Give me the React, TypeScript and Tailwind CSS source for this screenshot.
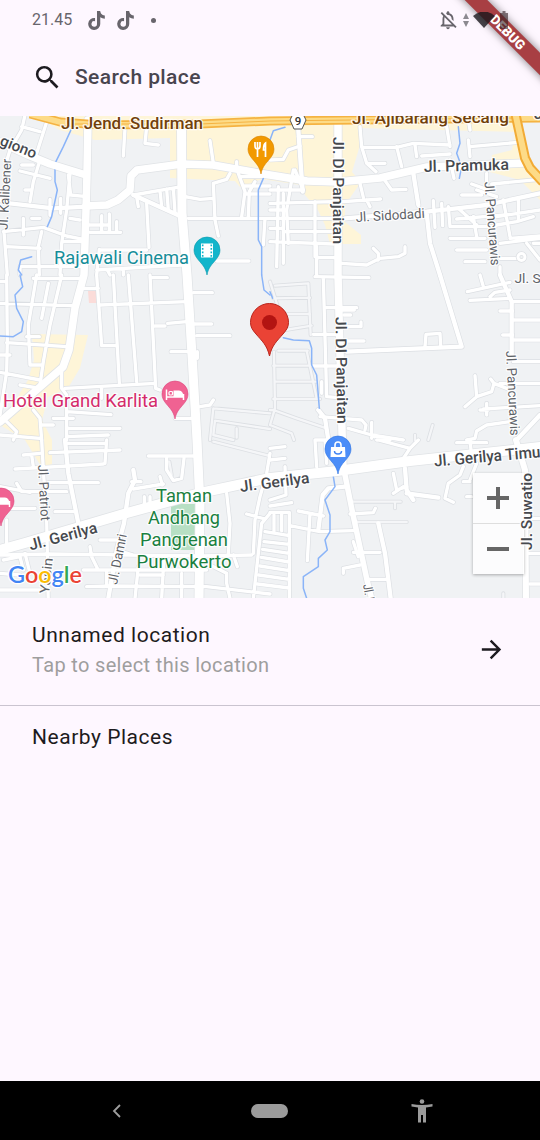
import React from "react";
import { MdSearch, MdArrowForward, MdOutlineNotificationsOff } from "react-icons/md";
import { FaTiktok } from "react-icons/fa";

type Tile = { x: number; y: number; minor: string; mid?: string; lane?: string; river?: string };

// Road geometry, stored in sections drawn at three times map scale.
const tiles: Tile[] = [
  {
    x: 0, y: 110,
    minor:
      "M75 15L65 60L30 120L18 160 M65 50L120 65 M145 20L110 130 M120 150L100 215L90 275 M65 165h35 M60 183L150 205 M75 240h20 M205 195L212 255L260 260 M210 190L200 300L185 400L180 495 M150 268v48 M182 265v45 M95 325h25 M10 365L130 352L200 378L250 388 M12 365L22 495 M20 410L120 415 M125 365L115 410L118 495 M210 325L240 330 M190 395h60 M70 325L70 375 M265 345h60 M270 367h92 M305 317v48 M328 312v50 M350 335v30 M375 55L370 138 M440 50L435 100L475 105 M630 92L640 160 M710 155v20 M400 255L545 230 M480 242L485 290 M500 237L505 300 M520 235L525 308 M410 260L415 290 M440 280L447 412 M545 258L600 268L640 265 M690 190L680 208L640 220L645 330L655 378 M565 325H810 M715 190L735 245L725 320 M765 215L748 245L745 320 M720 200h90 M730 228h80 M740 252h70 M795 325L790 405 M300 420H440 M322 480L330 495 M298 418L290 495 M290 480L545 465 M370 475v20 M650 453h97 M60 470h180 M60 470v25",
    mid: "M0 270L30 280L160 295L260 290 M400 255L545 320",
    river: "M215 55L190 110L165 160L165 215L172 240L155 320L142 350 M790 205L775 240L775 390L785 410V495 M95 440L62 450L55 480L65 495",
  },
  {
    x: 270, y: 110,
    minor:
      "M85 80h42 M0 150L40 148L55 120L90 108 M270 50L275 110L290 160L345 160 M290 160L318 185 M275 112L380 112L430 100L540 105 M600 110L745 97 M380 110L395 170 M435 105L440 140 M530 50L540 110 M540 150L552 205 M595 30L600 60 M595 90L600 140 M455 138L540 132 M340 205L365 240L408 238 M270 220L280 262 M190 277L332 267 M0 240h100 M0 280L190 275 M70 180L50 300L55 400 M0 325H190 M45 365H190 M0 395L190 402 M40 250L40 460 M25 230L20 470 M135 275V440 M140 410V495 M140 443h60 M0 355h40 M0 300h50 M75 180L100 240 M490 272L495 352 M515 280L518 347 M535 290L540 350 M545 350h130 M560 327L720 313 M568 298L620 345 M540 385h105 M560 420h90 M585 455h60 M665 222L810 208 M575 255h60 M605 222L650 238 M650 190V240 M700 270L720 380 M720 385L810 378 M680 345L740 335L790 320 M745 270V330 M690 400L810 385 M690 445H740 M690 470V495 M290 270L300 290 M215 460L290 465L330 445L385 440L405 430L405 410 M325 450L325 430L310 415 M770 400L810 450 M790 400h20 M610 320L620 380 M680 320L810 300 M620 240L680 260",
    mid: "M85 60L98 245 M225 325L470 305L560 295L650 285L810 250 M470 310L480 400L510 495 M430 190L445 285",
    river: "M0 90L10 62L45 52 M565 50L570 100L560 130L575 170L568 205",
  },
  {
    x: 0, y: 275,
    minor:
      "M20 0L22 200L20 290L0 420 M0 85L215 92 M110 0L85 150L90 270L125 270 M145 25L125 130 M185 0L150 150L130 260L120 330 M80 185h38 M20 203L200 215 M0 240h30 M0 292L120 315 M100 10H240 M240 40H295 M290 0L305 212L350 212 M340 0L358 325 M385 0L410 320 M450 0L467 340L480 345 M300 90L560 80 M450 8H502 M465 153h30 M503 145L560 140 M580 53h57 M580 147h55 M590 182h100 M513 230h50 M592 230v20 M195 340L465 325 M185 290L185 340L200 360L200 495 M305 340v30 M200 410L333 419 M200 460H360 M200 485L325 480 M100 405L120 430L125 495 M0 480L120 490 M125 450h35 M600 395L630 390L640 375 M525 430h60 M60 330L120 340 M0 20h20 M20 440L50 470L40 495 M160 430h60",
    lane: "M640 400L810 415 M640 400L630 495 M645 437L810 462 M645 437L640 480L700 495 M710 460v28",
    river: "M60 0L68 35L45 60L50 100L70 140L65 170L40 185L0 183 M785 0L792 45L810 60",
  },
  {
    x: 270, y: 275,
    minor:
      "M135 5L297 8 M160 10L170 365L205 368 M155 320V355 M165 98h95 M215 105h38 M130 178h80 M225 155h48v-14 M225 198h57 M130 273h80 M465 215L468 178L510 175L512 213 M592 50L720 22 M600 76L720 70 M630 0L640 35 M660 65L675 52L720 45 M690 108h38 M698 180h30 M730 80h80 M730 135h80 M730 195h80 M730 260h80 M690 325h120 M640 402L810 392 M615 302L620 365L585 395 M620 365L665 350L672 325L662 312 M672 325L710 340 M650 385v35 M630 405h25 M590 495L615 490L620 468L650 450L720 440 M150 425L275 435L288 450L285 465 M235 460L305 480L400 495 M305 442V490 M222 120h20",
    mid: "M230 230L575 215L510 0 M690 0L725 80L725 240 M145 405L165 430L175 495 M740 495L810 420",
    lane: "M15 32L115 25L122 180 M10 70L120 68 M20 117h100 M45 165L125 152 M25 227h88 M10 272h120 M15 320H138 M10 372H150 M12 230L15 400L0 450 M110 227L125 300L140 370 M10 405L80 430L170 460 M0 20L25 100 M475 495L488 450 M435 480V495 M0 450L65 475L72 495 M0 405L10 405",
    river: "M0 50L8 70 M40 188L70 195L118 197L125 220L125 270L140 300L148 400",
  },
  {
    x: 0, y: 440,
    minor:
      "M125 0L130 90L140 240L145 495 M45 87L310 72 M70 45L120 40 M95 45L100 80 M150 38L360 30 M320 0L315 70 M200 10h115 M50 130L65 155L200 155 M0 140L90 157 M145 128h150 M165 215h55 M30 205h75 M20 240V320 M395 125h28 M400 147L490 132 M480 110L487 135 M445 48H585 M500 55L500 90L520 122L545 115L552 55 M433 170v40 M450 170v40 M0 345L150 342L600 348L755 345 M270 320L275 350L292 385 M10 360L60 350L70 390 M75 340L90 400 M300 300h60 M250 390H620 M260 440L330 438L620 440L810 462 M415 380L405 475 M420 405h70 M492 350L485 475 M545 400V475 M680 160L690 250L685 340 M810 40L800 100L780 170L765 240L760 340 M740 222L795 237 M810 220L785 250L760 475 M700 345L712 380 M680 430L690 475 M0 400L60 405 M0 450h120 M630 375L680 400L680 430 M320 390V440 M350 330L400 345",
    mid: "M195 0L205 100L235 250 M400 90L405 120L385 160L372 250L350 330L325 475",
    lane: "M640 5L810 48 M508 65L515 105",
  },
  {
    x: 270, y: 440,
    minor:
      "M45 80L48 165L0 180 M85 213L160 228 M120 220L112 362 M60 257L150 275L250 272 M240 222L310 218L316 205 M250 337h80 M295 418h55 M270 375L220 385L220 400 M135 0L140 80 M165 0L170 70 M135 0h45 M325 0L420 25L445 0 M420 25L400 55 M370 100L380 150L410 140 M370 160L400 140 M580 80L570 105L535 130L525 175L550 187 M0 60L45 55 M0 25L45 20 M600 0L605 50 M560 8h90 M770 235h40 M770 340h40 M780 432h30 M590 170h15 M620 70L600 120 M250 305L265 350 M580 125h20 M0 198L65 188 M320 0H360 M0 217H58V475 M12 225v48 M35 222v50 M-15 275L58 287 M-18 305L58 313 M-22 328L58 340 M-26 352L58 366 M-30 378L58 392 M-34 405L58 418 M-38 432L58 444",
    mid: "M225 140L175 145L158 165L145 270 M405 85L410 150L430 180 M410 160L505 173 M325 250L345 340L362 475",
    lane: "M240 185H392 M375 185v20 M250 246H410 M700 460v15",
    river: "M190 110L195 140L165 180L180 225L180 275L165 300L172 330L145 355L145 380L100 410L100 445L110 475",
  },
];

const majors = [
  { d: "M88 120L87 173L86 210L84 275L75 308L69 350L63 367L40 387L0 422", w: 7.5 },
  { d: "M181.500 128L182 213L187 275L192 355L197 440L200 505L199 600", w: 9 },
  { d: "M86 206L107 205L118 200L130 190L131 176L137 170L182 164L213 165L270 175L307 181L337 182L380 178L427 167L525 163", w: 7.5 },
  { d: "M0 142L28 155L50 164L86 175", w: 7.5 },
  { d: "M338 124L338 275L343 470", w: 7.5 },
  { d: "M344 470L352 510L367 580L372 600", w: 5.5 },
  { d: "M516 440L525 470L526 600", w: 6 },
  { d: "M0 550L25 543L127 513L200 493L270 478L337 471L410 461L540 447", w: 10 },
];

function Roads() {
  const at = (t: Tile) => `translate(${t.x} ${t.y}) scale(.33333)`;
  return (
    <g fill="none" strokeLinecap="round" strokeLinejoin="round">
      {tiles.map((t, i) => (
        <g key={i} transform={at(t)} stroke="#dcdfe3">
          <path d={t.lane} strokeWidth="12" />
          <path d={t.minor} strokeWidth="14" />
          <path d={t.mid} strokeWidth="17" />
        </g>
      ))}
      {majors.map((m, i) => (
        <path key={i} d={m.d} stroke="#e0e3e6" strokeWidth={m.w + 1.5} />
      ))}
      {tiles.map((t, i) => (
        <g key={i} transform={at(t)} stroke="#fff">
          <path d={t.lane} strokeWidth="7" stroke="#f5f6f8" />
          <path d={t.minor} strokeWidth="10" />
          <path d={t.mid} strokeWidth="13" />
        </g>
      ))}
      {tiles.map((t, i) => (
        <path key={i} d={t.river} transform={at(t)} stroke="#8ab4f8" strokeWidth="4.500" />
      ))}
      {majors.map((m, i) => (
        <path key={i} d={m.d} stroke="#fff" strokeWidth={m.w} />
      ))}
      <circle cx="521.500" cy="257" r="3.500" fill="#f1f3f4" stroke="#dcdfe3" strokeWidth="4.500" />
      <circle cx="521.500" cy="257" r="3.500" stroke="#fff" strokeWidth="3" />
    </g>
  );
}

function Label({ x, y, w, size, color = "#46494e", weight = 500, rotate = 0, children }: {
  x: number; y: number; w: number; size: number; color?: string; weight?: number; rotate?: number; children: string;
}) {
  return (
    <text transform={`translate(${x} ${y}) rotate(${rotate})`} fontSize={size} fontWeight={weight} fill={color}
      textLength={w} lengthAdjust="spacingAndGlyphs" stroke="#fff" strokeOpacity=".85" strokeWidth="2.500" strokeLinejoin="round" paintOrder="stroke">
      {children}
    </text>
  );
}

function Pin({ x, y, color, edge, children }: { x: number; y: number; color: string; edge: string; children: React.ReactNode }) {
  return (
    <g transform={`translate(${x} ${y})`}>
      <path d="M0 25C-1.500 17-5 14.500-9 9.500C-11.500 6.500-13 3.500-13 0A13 13 0 0 1 13 0C13 3.500 11.500 6.500 9 9.500C5 14.500 1.500 17 0 25Z" fill={color} stroke={edge} strokeWidth=".6" />
      {children}
    </g>
  );
}

function Hotel() {
  return (
    <g>
      <path d="M-8.500-4.500V6M-8.500 3H8.500M8.500 6V0" stroke="#fff" strokeWidth="1.500" fill="none" />
      <path d="M-1.500-3.500H4Q8.500-3 8.500 3H-1.500Z" fill="#fff" />
      <rect x="-6" y="-2.500" width="3.500" height="3.500" rx="1" fill="none" stroke="#fff" strokeWidth="1.200" />
    </g>
  );
}

function MapView() {
  return (
    <svg viewBox="0 116 540 482" className="block h-full w-full" fontFamily="Roboto, sans-serif">
      <rect y="116" width="540" height="482" fill="#f0f2f4" />
      <g fill="#fef5d8">
        <path d="M35 116H515L525 165L540 182V200L520 180L490 172L492 155L512 150L515 132L360 128V145L352 172L361 182L345 205V222L361 235V244H330L325 225L318 210L305 195L300 185L262 179L240 187L235 181L170 178V138L95 140L60 130Z" />
        <path d="M32 334L88 335L80 368L68 388L48 397L42 420L52 440V464L42 468L25 440L0 425L28 380L34 360Z" />
      </g>
      <path d="M88 291h10v12h-9Z" fill="#fbdcd9" />
      <path d="M171 504H200V550H171Z" fill="#b7dfc4" />
      <Roads />
      <g fill="none" strokeLinejoin="round">
        <path d="M30 114L60 122L100 125L200 124L270 121L540 118" stroke="#f5b342" strokeWidth="9" />
        <path d="M30 114L60 122L100 125L200 124L270 121L540 118" stroke="#fddb87" strokeWidth="5.500" />
        <path d="M68 124L200 124L270 121L515 118" stroke="#f5b342" strokeWidth="1" />
        <path d="M515 112L525 158L530 168L543 182" stroke="#f2ab35" strokeWidth="10" />
        <path d="M515 112L525 158L530 168L543 182" stroke="#fddb87" strokeWidth="6" />
      </g>
      <path d="M294 112h8l4 8-4 9h-8l-4-9Z" fill="#fff" stroke="#555" strokeWidth="1" />
      <text x="298" y="125" fontSize="11.500" fontWeight="500" textAnchor="middle" fill="#333">9</text>

      <Label x={61} y={128.500} w={142} size={16} color="#713f0c">Jl. Jend. Sudirman</Label>
      <Label x={352} y={124} w={157} size={16} color="#713f0c" rotate={-0.5}>Jl. Ajibarang Secang</Label>
      <Label x={534} y={119} w={30} size={15}>Jl. S</Label>
      <Label x={-1} y={144.500} w={38} size={15} rotate={22}>giono</Label>
      <Label x={7.500} y={230} w={71} size={13} weight={400} rotate={-87} color="#5f6368">Jl. Kalibener</Label>
      <Label x={424} y={172} w={85} size={16} rotate={-1.5}>Jl. Pramuka</Label>
      <Label x={356} y={222} w={69} size={13.500} weight={400} rotate={-3.5} color="#5f6368">Jl. Sidodadi</Label>
      <Label x={333} y={137} w={107} size={15} rotate={90}>Jl. DI Panjaitan</Label>
      <Label x={335.500} y={317} w={107} size={15} rotate={89}>Jl. DI Panjaitan</Label>
      <Label x={484.500} y={182} w={84} size={13.500} weight={400} rotate={85.5} color="#5f6368">Jl. Pancurawis</Label>
      <Label x={506} y={351} w={85} size={13.500} weight={400} rotate={87} color="#5f6368">Jl. Pancurawis</Label>
      <Label x={514.500} y={283} w={66} size={13.500} weight={400} color="#5f6368">Jl. Sutomo</Label>
      <Label x={434.500} y={466.500} w={112} size={16} rotate={-5}>Jl. Gerilya Timur</Label>
      <Label x={240.500} y={492} w={70} size={15.500} rotate={-7.5}>Jl. Gerilya</Label>
      <Label x={30.500} y={550.500} w={70} size={15.500} rotate={-15}>Jl. Gerilya</Label>
      <Label x={38} y={465} w={56} size={13.500} weight={400} rotate={87} color="#5f6368">Jl. Patriot</Label>
      <Label x={117} y={585} w={51} size={13.500} weight={400} rotate={-79} color="#5f6368">Jl. Damri</Label>
      <Label x={49} y={594} w={36} size={13.500} weight={400} rotate={-84} color="#5f6368">Yasin</Label>
      <Label x={363} y={585} w={25} size={13} weight={400} rotate={80} color="#5f6368">Jl. Pe</Label>

      <Label x={54} y={263.500} w={135} size={18} weight={400} color="#168d99">Rajawali Cinema</Label>
      <Label x={3} y={407} w={155} size={18} weight={400} color="#d42b6b">Hotel Grand Karlita</Label>
      <Label x={156} y={502} w={56} size={18} weight={400} color="#198040">Taman</Label>
      <Label x={148} y={524} w={72} size={18} weight={400} color="#198040">Andhang</Label>
      <Label x={140} y={546} w={88} size={18} weight={400} color="#198040">Pangrenan</Label>
      <Label x={136.500} y={568} w={95} size={18} weight={400} color="#198040">Purwokerto</Label>

      <Pin x={261} y={149} color="#f29900" edge="#d98300">
        <path d="M-6-7V-3Q-6 0-3.500 0Q-1 0-1-3V-7M-3.500-7V8M4.500 8V-6Q2.500-5 2.500 1H4.500" fill="none" stroke="#fff" strokeWidth="1.700" />
      </Pin>
      <Pin x={207} y={250} color="#12b5cb" edge="#0b98ab">
        <rect x="-6" y="-6.500" width="12" height="14" fill="#fff" />
        <path d="M-4.300-5.500V8M4.300-5.500V8" stroke="#12b5cb" strokeWidth="1.600" strokeDasharray="1.800 1.700" />
      </Pin>
      <Pin x={175} y={394} color="#f06292" edge="#dc447c"><Hotel /></Pin>
      <Pin x={1} y={501} color="#f06292" edge="#dc447c"><Hotel /></Pin>
      <Pin x={338} y={449} color="#4b8df8" edge="#2f73e0">
        <path d="M-7-2H7L7.500 8H-7.500Z" fill="#fff" />
        <path d="M-3-1V-4A3 3 0 0 1 3-4V-1" stroke="#fff" strokeWidth="1.600" fill="none" />
        <path d="M-3.500 2A3.500 3 0 0 0 3.500 2" stroke="#4285f4" strokeWidth="1.500" fill="none" />
      </Pin>
      <path d="M269.500 356C267 345 262 341 256 334C252.500 330 250.500 327 250.500 322.500A19 19 0 0 1 288.500 322.500C288.500 327 286.500 330 283 334C277 341 272 345 269.500 356Z" fill="#ea4335" stroke="#b9251c" strokeWidth="1" />
      <circle cx="269.500" cy="322.500" r="7.500" fill="#b31412" />

      <text x="8" y="583" fontFamily="Lato, sans-serif" fontSize="23.500" fontWeight="600" textLength="74" lengthAdjust="spacingAndGlyphs" stroke="#fff" strokeWidth="2.500" paintOrder="stroke">
        <tspan fill="#4285f4">G</tspan><tspan fill="#ea4335">o</tspan><tspan fill="#fbbc04">o</tspan><tspan fill="#4285f4">g</tspan><tspan fill="#34a853">l</tspan><tspan fill="#ea4335">e</tspan>
      </text>
    </svg>
  );
}

function StatusBar() {
  return (
    <header className="flex h-10 items-center pl-8 text-[#68656c]">
      <span className="w-[55px] text-[16px]">21.45</span>
      <FaTiktok className="mr-[10px] size-[19px]" />
      <FaTiktok className="size-[19px]" />
      <span className="ml-4 size-[5px] rounded-full bg-[#68656c]" />
      <div className="relative z-20 mr-[30px] ml-auto flex items-center">
        <MdOutlineNotificationsOff className="mr-[3px] size-[22px]" />
        <svg viewBox="0 0 8 16" className="mr-[3px] h-4 w-2 fill-[#8c8990]"><path d="M4 1l3 6H1ZM4 15l3-6H1Z" /></svg>
        <svg viewBox="0 0 22 16" className="h-4 w-[22px] fill-[#19161b]/80"><path d="M0 4Q11-5 22 4L11 16Z" /></svg>
        <svg viewBox="0 0 12 18" className="ml-[3px] h-[18px] w-3 fill-[#342126]/60"><path d="M3 2H4.500V0H7.500V2H10V18H2V2Z" /></svg>
      </div>
    </header>
  );
}

export default function App() {
  return (
    <div className="relative flex h-[1140px] w-[540px] flex-col overflow-hidden bg-[#fef7ff] font-['Roboto',sans-serif]">
      <StatusBar />
      <div className="flex h-[76px] items-center pb-px pl-8">
        <MdSearch className="size-[31px] text-[#1d1b20]" />
        <span className="ml-3 pt-px text-[21px] font-medium tracking-[0.4px] text-[#49454f]">Search place</span>
      </div>
      <div className="relative h-[482px] shrink-0">
        <MapView />
        <div className="absolute top-[357px] left-[473px] flex h-[101px] w-[51px] flex-col bg-white/80 shadow-[0_1px_3px_rgba(0,0,0,0.3)]">
          <div className="flex flex-1 items-center justify-center border-b border-[#dedede] pr-px">
            <svg viewBox="0 0 22 22" className="size-[22px]"><path d="M0 11H22M11 0V22" stroke="#666" strokeWidth="4" /></svg>
          </div>
          <div className="flex flex-1 items-center justify-center pr-px">
            <div className="h-1 w-[22px] bg-[#666]" />
          </div>
        </div>
        <svg viewBox="0 0 18 90" className="absolute top-[350px] left-[519px] h-[90px] w-[18px]" fontFamily="Roboto, sans-serif">
          <Label x={13} y={84} w={77} size={15} rotate={-90}>Jl. Suwatio</Label>
        </svg>
      </div>
      <section className="flex h-[108px] shrink-0 items-center justify-between border-b-[1.5px] border-[#cac4d0] pr-[34px] pb-1 pl-8">
        <div className="flex flex-col">
          <span className="text-[21px] leading-[30px] tracking-[0.53px] text-[#1d1b20]">Unnamed location</span>
          <span className="text-[20px] leading-[30px] tracking-[0.34px] text-[#9e9e9e]">Tap to select this location</span>
        </div>
        <MdArrowForward className="size-[29px] text-[#1d1b20]" />
      </section>
      <h2 className="flex-1 pt-4 pl-8 text-[21px] leading-[30px] font-normal tracking-[0.53px] text-[#1d1b20]">Nearby Places</h2>
      <nav className="flex h-[59px] shrink-0 items-center bg-black pl-[111px]">
        <svg viewBox="0 0 12 16" className="h-4 w-3 fill-none stroke-[#9e9e9e] stroke-[1.8]"><path d="M9 2L3 8L9 14" /></svg>
        <div className="ml-[128px] h-[14px] w-[37px] rounded-full bg-[#9b9b9b]" />
        <svg viewBox="0 0 22 24" className="ml-[123px] h-6 w-[22px] fill-[#9b9b9b]"><circle cx="11" cy="2.500" r="2.300" /><path d="M.500 5Q11 7 21.500 5V7.500L15 8.500V23.500H12V16H10V23.500H7V8.500L.500 7.500Z" /></svg>
      </nav>
      <div className="absolute top-[24px] left-[438px] z-10 flex h-4 w-[140px] rotate-45 items-center justify-center bg-[#a83f43] text-[13.5px] font-black text-white shadow-[0_0_8px_rgba(0,0,0,0.5)]">DEBUG</div>
    </div>
  );
}
